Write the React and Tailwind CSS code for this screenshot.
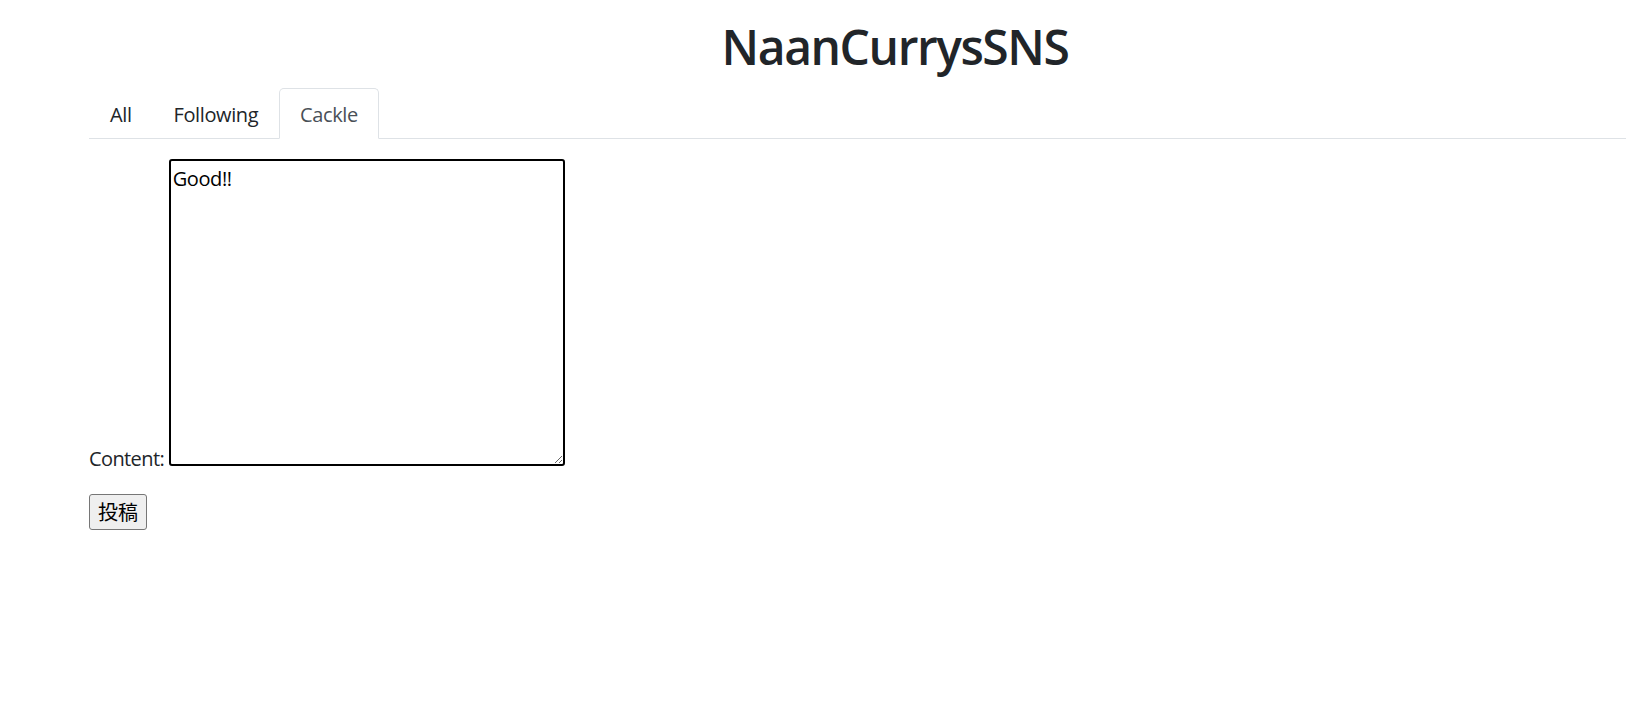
import { useState } from "react";

const TABS = ["All", "Following", "Cackle"];

export default function App() {
  const [active, setActive] = useState("Cackle");
  const [content, setContent] = useState("Good!!");

  return (
    <div
      className="min-h-[702px] bg-white text-[#212529] text-[20px]"
      style={{ fontFamily: '"Open Sans", "Noto Sans CJK JP", sans-serif' }}
    >
      <div className="pl-[89px]">
        <h1 className="pt-[17px] mb-[11px] pl-[75px] text-center text-[48px] leading-[60px] font-semibold tracking-[-0.03em]">
          NaanCurrysSNS
        </h1>

        <ul className="flex border-b border-[#dee2e6]">
          {TABS.map((t) => (
            <li key={t} className="-mb-px">
              <button
                onClick={() => setActive(t)}
                className={
                  "block px-[20px] pt-[11px] pb-[9px] leading-[29px] border rounded-t-[5px] tracking-[-0.02em] " +
                  (active === t
                    ? "border-[#dee2e6] border-b-white bg-white text-[#495057]"
                    : "border-transparent text-[#212529]")
                }
              >
                {t}
              </button>
            </li>
          ))}
        </ul>

        <form className="pt-[20px]" onSubmit={(e) => e.preventDefault()}>
          <div className="leading-[30px]">
            <label className="tracking-[-0.03em]">
              Content:{" "}
              <textarea
                value={content}
                onChange={(e) => setContent(e.target.value)}
                className="w-[396px] h-[307px] align-baseline border-2 border-black rounded-[3px] px-[2px] pt-[4px] pb-0 text-[20px] leading-[28px] tracking-[-0.02em] text-black outline-none"
              />
            </label>
          </div>
          <button
            type="submit"
            className="mt-[20px] px-[8px] py-[1px] leading-[32px] border border-[#767676] bg-[#efefef] rounded-[3px] text-black text-[20px]"
            style={{ fontFamily: '"Noto Sans CJK JP", sans-serif' }}
          >
            投稿
          </button>
        </form>
      </div>
    </div>
  );
}
